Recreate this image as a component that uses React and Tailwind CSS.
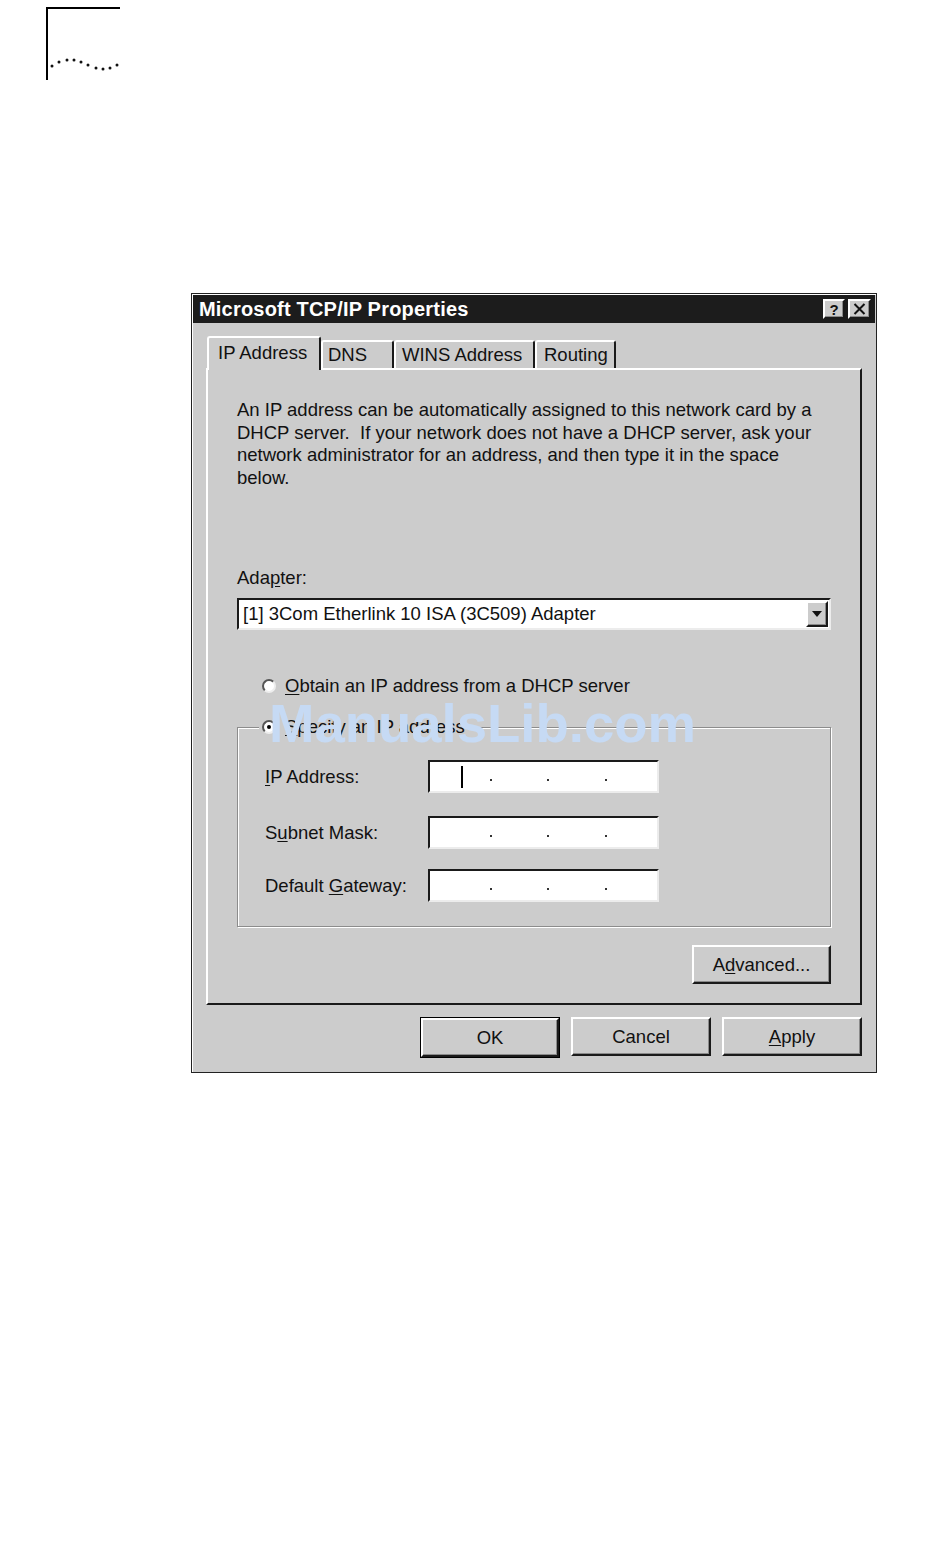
const raised =
  'bg-[#cccccc] border-2 border-t-white border-l-white border-r-[#1a1a1a] border-b-[#1a1a1a] shadow-[inset_-1px_-1px_0_#8a8a8a]'
const sunken =
  'bg-white border-2 border-t-[#1a1a1a] border-l-[#1a1a1a] border-r-[#ececec] border-b-[#ececec]'

function Hot({ children }) {
  return <span className="underline underline-offset-2">{children}</span>
}

function CornerMark() {
  return (
    <div className="pl-[46px] pt-[7px]">
      <div className="relative w-[74px] h-[73px] border-l-2 border-t-2 border-black">
        <svg width="74" height="73" className="absolute left-0 top-0">
          {[[4, 57], [11, 53], [19, 51], [26, 51], [33, 53], [40, 56], [48, 59], [55, 60], [62, 59], [69, 56]].map(([x, y], i) => (
            <circle key={i} cx={x} cy={y} r="1.5" fill="#111" />
          ))}
        </svg>
      </div>
    </div>
  )
}

function Radio({ checked }) {
  return (
    <span className="w-[14px] h-[14px] rounded-full bg-white border-2 border-t-[#555] border-l-[#555] border-r-[#eee] border-b-[#eee] flex items-center justify-center shrink-0">
      {checked && <span className="w-[4px] h-[4px] rounded-full bg-black" />}
    </span>
  )
}

function IpField({ cursor }) {
  return (
    <div className={`${sunken} w-[231px] h-[33px] flex`}>
      {cursor && <span className="ml-[31px] w-[2px] h-[22px] bg-black self-center" />}
      <span className={`${cursor ? 'ml-[27px]' : 'ml-[60px]'} w-[2px] h-[2px] bg-[#333] self-end mb-[10px]`} />
      <span className="ml-[55px] w-[2px] h-[2px] bg-[#333] self-end mb-[10px]" />
      <span className="ml-[56px] w-[2px] h-[2px] bg-[#333] self-end mb-[10px]" />
    </div>
  )
}

function Tab({ label, width, pad, active }) {
  return (
    <div
      className={`${width} ${pad} flex items-center border-t-2 border-l-2 border-r-2 border-t-white border-l-white border-r-[#1a1a1a] rounded-t-[3px] bg-[#cccccc] ${
        active ? 'h-[34px] -mb-[2px] relative z-10 pb-[2px]' : 'h-[28px]'
      }`}
    >
      {label}
    </div>
  )
}

function Button({ children, className = '' }) {
  return (
    <div className={`${raised} h-[39px] flex items-center justify-center ${className}`}>{children}</div>
  )
}

export default function App() {
  return (
    <div className="relative min-h-[1562px] bg-white text-[18.5px] text-[#111] font-['Liberation_Sans',Arial,sans-serif]">
      <CornerMark />

      <div className="ml-[191px] mt-[213px] w-[686px] border border-[#222] bg-[#cccccc] p-[1px] shadow-[inset_1px_1px_0_#fff]">
        <div className="h-[28px] bg-[#1c1c1c] flex items-center justify-between pl-[6px] pr-[4px]">
          <span className="text-white font-bold text-[20px] tracking-[0.2px]">Microsoft TCP/IP Properties</span>
          <div className="flex gap-[3px]">
            <div className={`${raised} w-[22px] h-[20px] flex items-center justify-center font-bold text-[15px] leading-none`}>?</div>
            <div className={`${raised} w-[23px] h-[20px] flex items-center justify-center`}>
              <svg width="13" height="12" viewBox="0 0 13 12">
                <path d="M1.5 1 L11.5 11 M11.5 1 L1.5 11" stroke="#111" strokeWidth="2" />
              </svg>
            </div>
          </div>
        </div>

        <div className="px-[13px] pt-[13px] pb-[13px]">
          <div className="h-[32px] flex items-end pl-[1px]">
            <Tab label="IP Address" width="w-[114px]" pad="pl-[9px]" active />
            <Tab label="DNS" width="w-[73px]" pad="pl-[5px]" />
            <Tab label="WINS Address" width="w-[141px]" pad="pl-[6px]" />
            <Tab label="Routing" width="w-[81px]" pad="pl-[7px]" />
          </div>

          <div className="h-[637px] border-2 border-t-white border-l-white border-r-[#1a1a1a] border-b-[#1a1a1a] px-[29px] pt-[29px] flex flex-col">
            <p className="leading-[22.5px] w-[592px]">
              An IP address can be automatically assigned to this network card by a DHCP server.&nbsp; If your network does not have a DHCP server, ask your network administrator for an address, and then type it in the space below.
            </p>

            <div className="mt-[78px] leading-[22px]">
              Ada<Hot>p</Hot>ter:
            </div>
            <div className={`${sunken} mt-[9px] h-[32px] flex items-center justify-between pl-[4px] pr-[1px]`}>
              <span>[1] 3Com Etherlink 10 ISA (3C509) Adapter</span>
              <div className={`${raised} w-[22px] h-[26px] flex items-center justify-center`}>
                <svg width="10" height="6" viewBox="0 0 10 6">
                  <path d="M0 0 H10 L5 6 Z" fill="#111" />
                </svg>
              </div>
            </div>

            <div className="mt-[45px] h-[22px] flex items-center gap-[9px] pl-[25px]">
              <Radio />
              <span>
                <Hot>O</Hot>btain an IP address from a DHCP server
              </span>
            </div>

            <fieldset className="mt-[19px] border border-[#8c8c8c] shadow-[inset_1px_1px_0_#fff,1px_1px_0_#fff] pb-[24px]">
              <legend className="ml-[21px] px-[3px] h-[22px] flex items-center gap-[9px] bg-[#cccccc]">
                <Radio checked />
                <span>
                  <Hot>S</Hot>pecify an IP address
                </span>
              </legend>
              <div className="mt-[22px] pl-[27px] flex items-center">
                <span className="w-[163px]">
                  <Hot>I</Hot>P Address:
                </span>
                <IpField cursor />
              </div>
              <div className="mt-[23px] pl-[27px] flex items-center">
                <span className="w-[163px]">
                  S<Hot>u</Hot>bnet Mask:
                </span>
                <IpField />
              </div>
              <div className="mt-[20px] pl-[27px] flex items-center">
                <span className="w-[163px]">
                  Default <Hot>G</Hot>ateway:
                </span>
                <IpField />
              </div>
            </fieldset>

            <div className="mt-[18px] flex justify-end">
              <Button className="w-[139px]">
                A<Hot>d</Hot>vanced...
              </Button>
            </div>
          </div>

          <div className="mt-[12px] flex justify-end gap-[11px]">
            <div className="border border-black">
              <Button className="w-[138px] h-[37px]">OK</Button>
            </div>
            <Button className="w-[140px]">Cancel</Button>
            <Button className="w-[140px]">
              <Hot>A</Hot>pply
            </Button>
          </div>
        </div>
      </div>

      <div className="absolute left-[269px] top-[697px] text-[54.5px] font-bold leading-none text-[#c6daf4] pointer-events-none">
        ManualsLib.com
      </div>
    </div>
  )
}
